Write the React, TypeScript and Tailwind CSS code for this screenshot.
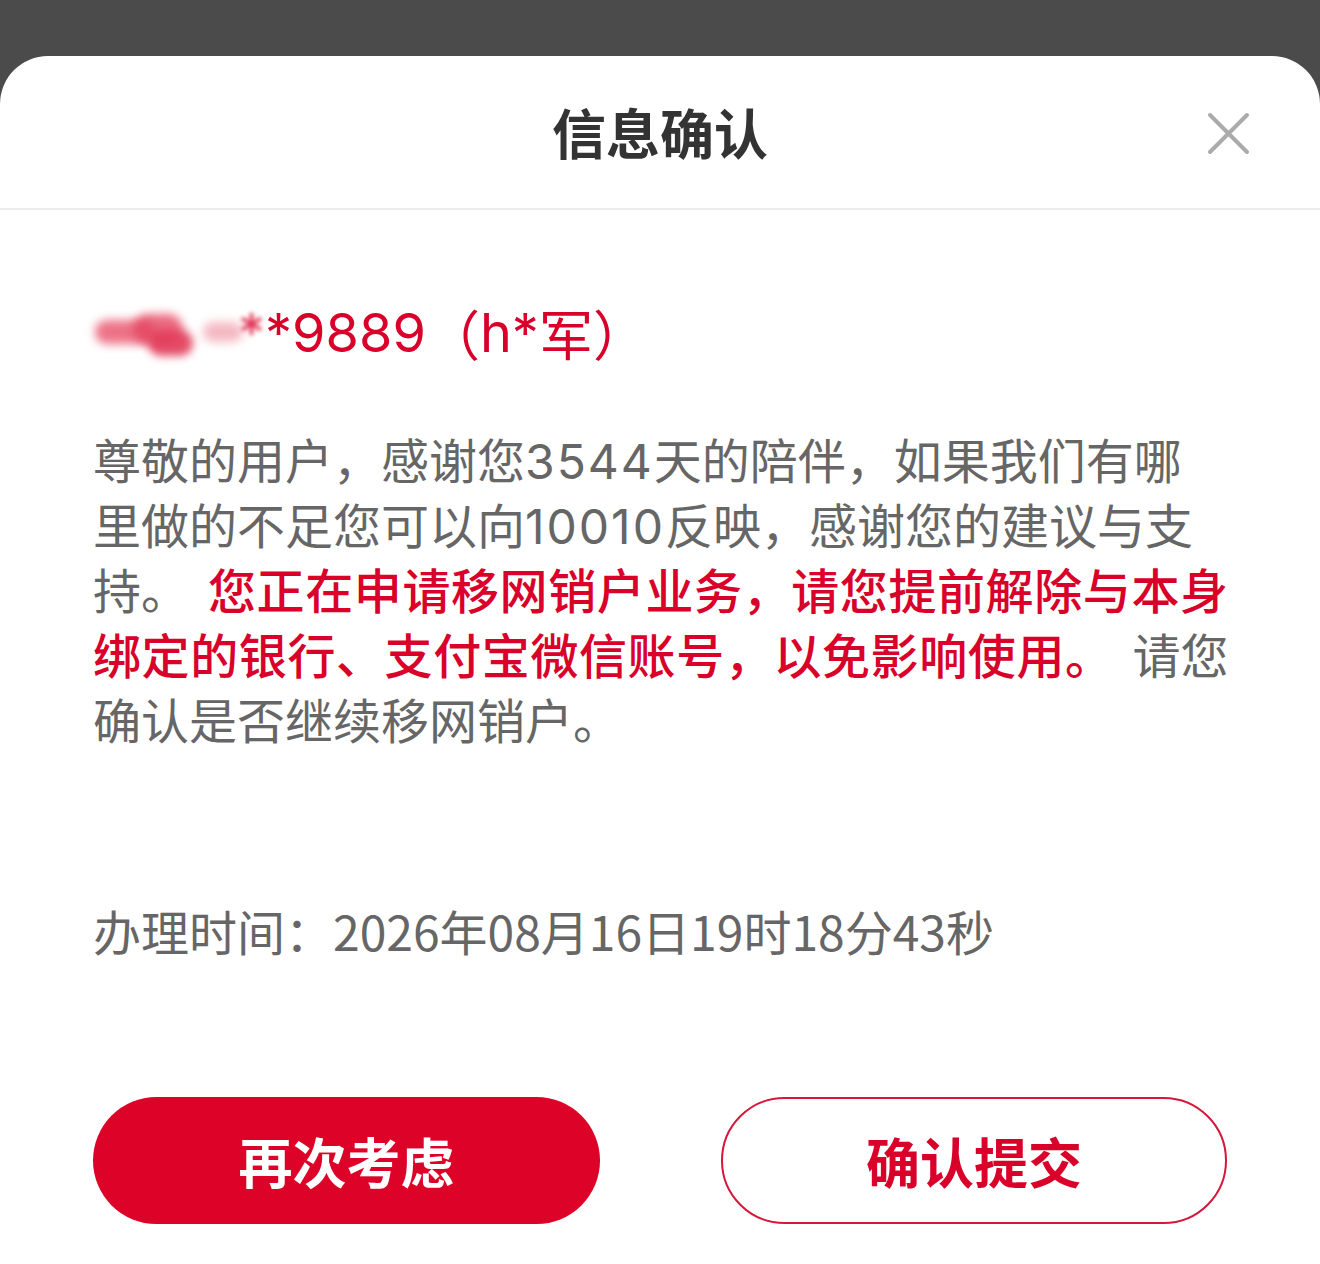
import React from "react";

const RED = "text-[#d9002a]";
const LAT = { fontFamily: 'Inter, "Noto Sans CJK SC", sans-serif' };

export default function App() {
  return (
    <div
      className="w-[1320px] h-[1264px] bg-[#4b4b4b] flex flex-col overflow-hidden"
      style={{ fontFamily: '"Noto Sans CJK SC", "Noto Sans", sans-serif' }}
    >
      <div className="h-[56px] shrink-0" />
      <div className="flex-1 bg-white rounded-t-[48px] flex flex-col">
        {/* header */}
        <div className="relative h-[154px] shrink-0 border-b-2 border-[#ececec] flex items-center justify-center">
          <div className="text-[54px] font-bold text-[#333333] leading-none">信息确认</div>
          <button className="absolute right-[70px] top-[56px] w-[43px] h-[43px]">
            <svg viewBox="0 0 43 43" className="w-[43px] h-[43px]">
              <path d="M3 3 L40 40 M40 3 L3 40" stroke="#ababab" strokeWidth="4" strokeLinecap="round" fill="none" />
            </svg>
          </button>
        </div>

        <div className="px-[93px] flex flex-col">
          {/* phone */}
          <div className={`mt-[90px] h-[65px] flex items-center ${RED} text-[54px] leading-[65px]`}>
            <span className="relative inline-block w-[145px] h-[50px]">
              <span className="absolute left-[2px] top-[12px] w-[60px] h-[24px] rounded-full bg-[#e8506a] blur-[5px] opacity-80" />
              <span className="absolute left-[40px] top-[6px] w-[50px] h-[30px] rounded-full bg-[#e5445f] blur-[5px] opacity-80" />
              <span className="absolute left-[55px] top-[22px] w-[45px] h-[26px] rounded-full bg-[#e23a58] blur-[4px] opacity-90" />
              <span className="absolute left-[110px] top-[14px] w-[40px] h-[20px] rounded-full bg-[#ee8a9a] blur-[5px] opacity-60" />
            </span>
            <span className="blur-[2px] opacity-80" style={LAT}>*</span>
            <span style={LAT}>*9889</span>
            <span>（</span>
            <span style={LAT}>h*</span>
            <span>军）</span>
          </div>

          {/* paragraph */}
          <div className="mt-[61px] text-[48px] leading-[65px] text-[#666666]">
            <div className="h-[65px] whitespace-nowrap">
              尊敬的用户，感谢您<span className="tracking-[2px]" style={LAT}>3544</span>天的陪伴，如果我们有哪
            </div>
            <div className="h-[65px] whitespace-nowrap">
              里做的不足您可以向<span className="tracking-[2px]" style={LAT}>10010</span>反映，感谢您的建议与支
            </div>
            <div className="h-[65px] whitespace-nowrap">
              持。<span className="inline-block w-[19px]" />
              <span className={`${RED} font-medium tracking-[0.6px]`}>您正在申请移网销户业务，请您提前解除与本身</span>
            </div>
            <div className="h-[65px] whitespace-nowrap">
              <span className={`${RED} font-medium tracking-[0.6px]`}>绑定的银行、支付宝微信账号，以免影响使用。</span>
              <span className="inline-block w-[19px]" />
              请您
            </div>
            <div className="h-[65px] whitespace-nowrap">确认是否继续移网销户。</div>
          </div>

          {/* time */}
          <div className="mt-[147px] h-[65px] text-[48px] leading-[65px] text-[#666666] whitespace-nowrap">
            办理时间：2026年08月16日19时18分43秒
          </div>

          {/* buttons */}
          <div className="mt-[134px] flex justify-between">
            <button className="w-[507px] h-[127px] rounded-full bg-[#dc0228] text-white text-[54px] font-bold flex items-center justify-center">
              再次考虑
            </button>
            <button className={`w-[506px] h-[127px] rounded-full border-2 border-[#d4173a] bg-white ${RED} text-[54px] font-bold flex items-center justify-center`}>
              确认提交
            </button>
          </div>
        </div>
      </div>
    </div>
  );
}
